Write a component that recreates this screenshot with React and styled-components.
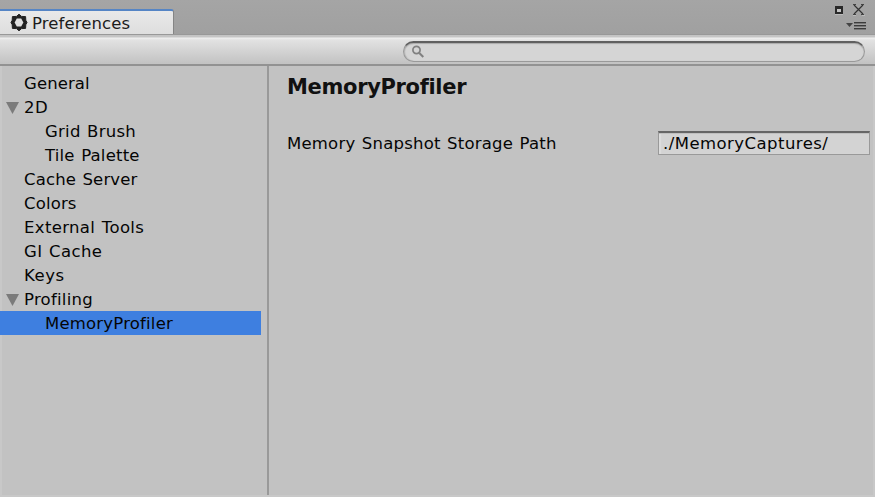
import React from "react";
import styled, { createGlobalStyle } from "styled-components";

const Global = createGlobalStyle`
  *{box-sizing:border-box}
  html,body{margin:0;padding:0}
  body{font-family:"DejaVu Sans",Verdana,sans-serif;font-size:16.5px;color:#050505;background:#c2c2c2;overflow:hidden}
`;
const Window = styled.div`
  width:875px;height:497px;display:flex;flex-direction:column;background:#c2c2c2;
`;
const TabBar = styled.header`
  height:35px;flex:none;display:flex;justify-content:space-between;align-items:flex-end;
  background:linear-gradient(#a5a5a5,#a0a0a0);border-bottom:1px solid #989898;
`;
const Tab = styled.div`
  width:174px;height:25px;display:flex;align-items:center;padding:0 0 0 10px;
  background:linear-gradient(#e9e9e9,#dedede);border-top:2px solid #5585c5;border-right:1px solid #858585;
  border-top-right-radius:3px;color:#1c1c1c;
  svg{margin:-1px 4px 0 0;flex:none}
`;
const Text = styled.span`
  white-space:pre;line-height:24px;letter-spacing:${p => p.$spacing || 0}px;word-spacing:1px;
`;
const Label = styled(Text)`
  padding-top:2px;
`;
const Controls = styled.div`
  width:40px;height:34px;display:flex;
`;
const Toolbar = styled.div`
  height:31px;flex:none;display:flex;justify-content:flex-end;padding:6px 10px 0 0;
  background:linear-gradient(#c4c4c4 0,#c4c4c4 2px,#f0f0f0 3px,#e2e2e2 5px,#c3c3c3 28px);
  border-bottom:2px solid #929292;
`;
const Search = styled.div`
  width:462px;height:21px;border-radius:11px;background:#d5d5d5;border:1px solid #999;border-top:2px solid #606060;
  box-shadow:inset 0 1px 1px #aaa,inset 1px 0 1px #bbb;padding:1px 0 0 8px;
`;
const Body = styled.div`
  flex:1;display:flex;border:solid #c8c8c8;border-width:0 2px 2px;
`;
const Sidebar = styled.nav`
  width:267px;flex:none;border-right:2px solid #999;padding-top:5px;
`;
const Row = styled.div`
  height:24px;margin-left:-2px;width:261px;display:flex;align-items:center;
  padding-left:${p => (p.$child ? 45 : 6)}px;background:${p => (p.$selected ? "#3e7fe0" : "transparent")};
`;
const Arrow = styled.svg`
  width:13px;height:12px;margin:2px 5px 0 0;flex:none;
`;
const Content = styled.main`
  flex:1;padding:8px 3px 0 18px;
`;
const Title = styled.h1`
  margin:0;font-size:21px;line-height:26px;letter-spacing:${p => p.$spacing}px;color:#111;
`;
const Field = styled.div`
  margin-top:31px;height:24px;display:flex;align-items:center;justify-content:space-between;
`;
const Input = styled.div`
  width:212px;height:24px;display:flex;align-items:center;padding-left:4px;background:#d3d3d3;
  border:1px solid #999;border-top:2px solid #666;box-shadow:inset 0 1px 0 #c0c0c0,inset 2px 0 1px #ddd;
`;

const items = [
  { label: "General", s: 0.1 },
  { label: "2D", open: true, s: 0.4 },
  { label: "Grid Brush", child: true, s: 0.25 },
  { label: "Tile Palette", child: true, s: 0.2 },
  { label: "Cache Server", s: 0.15 },
  { label: "Colors", s: 0.15 },
  { label: "External Tools", s: 0.35 },
  { label: "GI Cache", s: 0.4 },
  { label: "Keys", s: 0.5 },
  { label: "Profiling", s: 0.25, open: true },
  { label: "MemoryProfiler", child: true, selected: true, s: 0.2 },
];

export default function App() {
  return (
    <>
      <Global />
      <Window>
        <TabBar>
          <Tab>
            <svg width="18" height="19" viewBox="0 0 18 19">
              <path d="M9 1.2 11.5 3.4 15.6 3.6 15.8 7.3 17 9.5 15.8 11.7 15.6 15.4 11.5 15.6 9 17.8 6.5 15.6 2.4 15.4 2.2 11.7 1 9.5 2.2 7.3 2.4 3.6 6.5 3.4Z" fill="#222" stroke="#222" strokeLinejoin="round" />
              <path d="M6.8 5.6h4.4l2.2 3.9-2.2 3.9H6.8L4.6 9.5Z" fill="#e0e0e0" />
            </svg>
            <Label $spacing={0.1}>Preferences</Label>
          </Tab>
          <Controls>
            <svg width="40" height="34" viewBox="0 0 40 34">
              <path d="M0 14.5h8M18 15.5h3m6 0h3" stroke="#bbb" />
              <path d="M0 6h8v8H0ZM2 9v3h4V9Z" fill="#292929" fillRule="evenodd" />
              <path d="M2 9h4v3H2Z" fill="#c4c4c4" />
              <path d="m19 5 9 9m0-9-9 9" stroke="#333" strokeWidth="1.2" />
              <path d="M18 4.5h3m5 0h3m-11 10h3m5 0h3" stroke="#444" />
              <path d="M11 23h7l-3.5 4Z" fill="#444" />
              <path d="M19 23.5h12m-12 3h12m-12 3h12" stroke="#777" />
              <path d="M19 22.5h12m-12 3h12m-12 3h12" stroke="#3c3c3c" />
            </svg>
          </Controls>
        </TabBar>
        <Toolbar>
          <Search>
            <svg width="13" height="14" viewBox="0 0 13 14">
              <circle cx="4.5" cy="5" r="3.6" fill="none" stroke="#808080" strokeWidth="1.7" />
              <path d="m7.3 8 4 4" stroke="#808080" strokeWidth="2" />
            </svg>
          </Search>
        </Toolbar>
        <Body>
          <Sidebar>
            {items.map(i => (
              <Row key={i.label} $child={i.child} $selected={i.selected}>
                {!i.child && (
                  <Arrow viewBox="0 0 13 12">
                    {i.open && <path d="M0 0h13L6.5 12Z" fill="#7b7b7b" />}
                  </Arrow>
                )}
                <Label $spacing={i.s}>{i.label}</Label>
              </Row>
            ))}
          </Sidebar>
          <Content>
            <Title $spacing={-0.33}>MemoryProfiler</Title>
            <Field>
              <Label $spacing={0.21}>Memory Snapshot Storage Path</Label>
              <Input><Text $spacing={0.45}>./MemoryCaptures/</Text></Input>
            </Field>
          </Content>
        </Body>
      </Window>
    </>
  );
}
